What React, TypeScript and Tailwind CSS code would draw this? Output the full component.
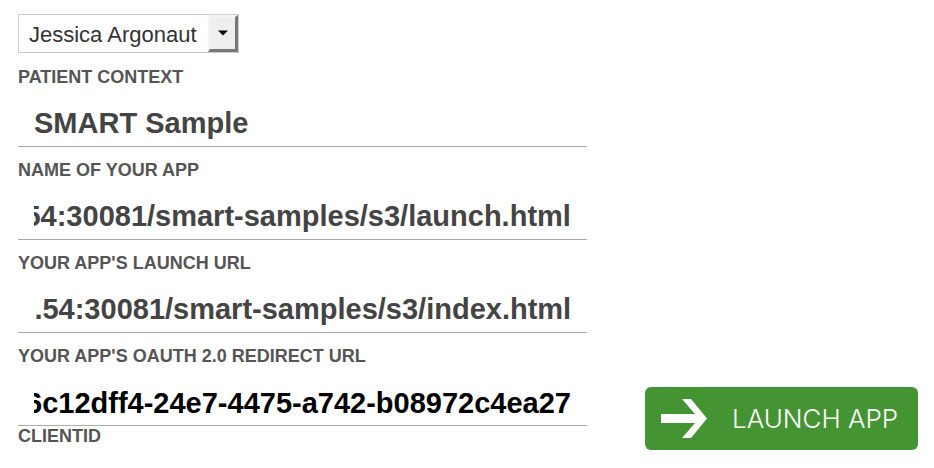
import { useLayoutEffect, useRef } from "react";

type FieldProps = {
  id: string;
  label: string;
  value: string;
  inputClass?: string;
  labelClass?: string;
};

function Field({ id, label, value, inputClass = "pt-0.5 text-[#444]", labelClass = "mt-[13px]" }: FieldProps) {
  const ref = useRef<HTMLInputElement>(null);

  // Long values show their end, which is the part that differs between fields.
  useLayoutEffect(() => {
    if (ref.current) ref.current.scrollLeft = ref.current.scrollWidth;
  }, []);

  return (
    <div className="flex flex-col-reverse">
      <label htmlFor={id} className={`${labelClass} text-lg leading-5 font-bold text-[#555] uppercase`}>
        {label}
      </label>
      <input
        id={id}
        ref={ref}
        type="text"
        defaultValue={value}
        className={`mt-3 h-12 w-full border-b border-[#aaa] bg-transparent px-4 text-[29px] font-bold outline-none ${inputClass}`}
      />
    </div>
  );
}

export default function App() {
  return (
    <form
      className="flex items-end gap-[58px] bg-white pt-[14px] pr-4 pl-[18px] font-['Liberation_Sans',Arial,sans-serif]"
      onSubmit={(e) => e.preventDefault()}
    >
      <div className="min-w-0 flex-1 pb-1">
        <div className="flex flex-col items-start">
          <div className="relative">
            <select
              id="patient"
              className="block h-[39px] w-[221px] appearance-none border border-[#ccc] bg-white pt-0.5 pl-[10px] text-[22px] text-[#333] outline-none"
            >
              <option>Jessica Argonaut</option>
            </select>
            <span className="pointer-events-none absolute top-px right-px bottom-px flex w-[30px] items-center justify-center border-t-2 border-r-3 border-b-3 border-l-2 border-t-[#f4f4f4] border-r-[#777] border-b-[#777] border-l-[#f4f4f4] bg-[#eee]">
              <svg width="10" height="6" viewBox="0 0 10 6" aria-hidden="true">
                <path d="M0 0.5h10L5 5.5z" fill="#000" />
              </svg>
            </span>
          </div>
          <label htmlFor="patient" className="mt-[14px] text-lg leading-5 font-bold text-[#555] uppercase">
            Patient context
          </label>
        </div>
        <Field id="name" label="Name of your app" value="SMART Sample" />
        <Field id="launch" label="Your app's launch URL" value="http://172.16.2.54:30081/smart-samples/s3/launch.html" />
        <Field id="redirect" label="Your app's OAuth 2.0 redirect URL" value="http://172.16.2.54:30081/smart-samples/s3/index.html" />
        <Field
          id="client"
          label="ClientID"
          value="6c12dff4-24e7-4475-a742-b08972c4ea27"
          inputClass="pt-1 text-black"
          labelClass="mt-0"
        />
      </div>
      <button
        type="submit"
        className="flex h-[63px] w-[273px] shrink-0 items-center gap-[25px] rounded-md bg-[#459433] pl-4 font-['Inter',sans-serif] text-[26px] font-light text-white"
      >
        <svg width="46" height="39" viewBox="0 0 46 39" aria-hidden="true">
          <path d="M0 15H34L21 0H30L46 19.500L30 39H21L34 24H0z" fill="#fff" />
        </svg>
        LAUNCH APP
      </button>
    </form>
  );
}
